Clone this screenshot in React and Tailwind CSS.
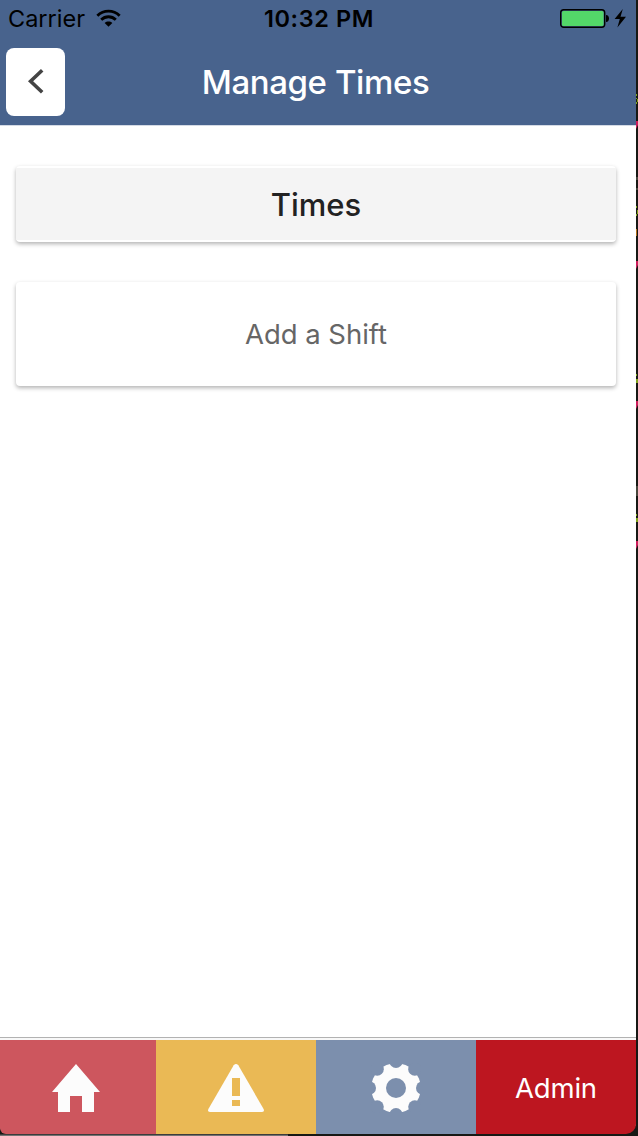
import React from "react";

function StatusBar() {
  return (
    <div className="grid h-10 grid-cols-3 items-center pl-2 pr-2 text-black">
      <div className="flex h-[38px] items-center self-start">
        <span className="w-[88px] text-[23.5px] leading-none">Carrier</span>
        <svg className="mb-0.5 h-[19px] w-[25px]" viewBox="0 0 26 19" fill="none">
          <path d="M1.4 6.6C8 .3 18 .3 24.6 6.6" stroke="black" strokeWidth="3" />
          <path d="M5.4 10.8c4.3-4.1 10.9-4.1 15.2 0" stroke="black" strokeWidth="3" />
          <path d="M9 14.1c2.4-2 5.6-2 8 0l-4 4z" fill="black" />
        </svg>
      </div>
      <div className="flex h-[38px] items-center justify-center self-start pl-0.5">
        <span className="whitespace-nowrap text-[23.5px] font-semibold leading-none tracking-[0.6px]">10:32 PM</span>
      </div>
      <div className="flex h-9 items-center justify-end self-start">
        <svg className="h-[22px] w-[68px]" viewBox="0 0 68 22">
          <rect x=".7" y="2.7" width="44" height="17.6" rx="3" fill="none" stroke="black" strokeWidth="1.4" />
          <rect x="2" y="4" width="41.5" height="15" rx="1.5" fill="#53d769" />
          <path d="M46 8c4 0 4 7 0 7z" fill="black" />
          <path d="m62.8 2-8.2 10h5.2l-2.4 8.5 8.6-10.8h-5.5z" fill="black" />
        </svg>
      </div>
    </div>
  );
}

function Header() {
  return (
    <header className="h-[126px] shrink-0 border-b border-[#d4dae5] bg-[#48638d]">
      <StatusBar />
      <div className="grid grid-cols-[59px_1fr_59px] pl-1.5 pr-[11px] pt-2">
        <button className="flex h-[68px] items-center justify-center rounded-lg bg-white" aria-label="Back">
          <svg className="mb-0.5 h-7 w-7" viewBox="0 0 28 28" fill="none">
            <path d="M20.2 3.2 8.6 14.2l11.6 11.1" stroke="#444" strokeWidth="3.6" />
          </svg>
        </button>
        <h1 className="flex h-[68px] items-center justify-center text-[33px] font-medium leading-none tracking-[-0.4px] text-white">
          Manage Times
        </h1>
      </div>
    </header>
  );
}

function TabBar() {
  return (
    <nav className="grid h-[97px] shrink-0 grid-cols-[156px_160px_160px_160px] rounded-br-[10px] rounded-bl-[6px] border-t border-[#b2b2b2] pt-0.5">
      <div className="flex items-center justify-center rounded-bl-[6px] bg-[#cd565e] pt-0.5 shadow-[0_-2px_0_#f8f8f8]">
        <svg className="ml-[-4px] h-12 w-12" viewBox="0 0 48 48" fill="#fcfcfc">
          <path d="M24 0 0 28h6v20h12V32h12v16h12V28h6z" />
        </svg>
      </div>
      <div className="flex items-center justify-center bg-[#eab955] pt-0.5 shadow-[0_-2px_0_#f8f8f8]">
        <svg className="h-12 w-14" viewBox="0 0 56 48">
          <path d="M25.7 1.3Q28-1.3 30.3 1.3L55.6 45Q56.8 48 53.5 48h-51Q-.8 48 .4 45z" fill="#fcfcfc" />
          <path d="M24 14h8v18h-8zM24 36h8v6h-8z" fill="#eab955" />
        </svg>
      </div>
      <div className="flex items-center justify-center bg-[#7c8fad] pt-0.5 shadow-[0_-2px_0_#f8f8f8]">
        <svg className="h-[50px] w-[50px]" viewBox="-25 -25 50 50">
          <circle r="24.8" fill="#fcfcfc" />
          <g fill="#7c8fad">
            <circle r="10" />
            <circle cy="-26.6" r="6.6" />
            <circle cy="26.6" r="6.6" />
            <circle cx="-26.6" r="6.6" />
            <circle cx="26.6" r="6.6" />
            <circle cx="18.8" cy="18.8" r="6.6" />
            <circle cx="-18.8" cy="18.8" r="6.6" />
            <circle cx="18.8" cy="-18.8" r="6.6" />
            <circle cx="-18.8" cy="-18.8" r="6.6" />
          </g>
        </svg>
      </div>
      <div className="flex items-center justify-center rounded-br-[10px] bg-[#bd1620] pt-[3px] text-[27.5px] leading-none tracking-[-0.2px] text-white shadow-[0_-2px_0_#f8f8f8]">
        Admin
      </div>
    </nav>
  );
}

function EditorEdge() {
  return (
    <svg className="h-[1136px] w-0.5 shrink-0" viewBox="0 0 2 1136">
      <path d="M0 0h2v1136H0z" fill="#171814" />
      <path d="M0 94h1v2H0zM0 99h2v3H0v2h1v-6H0zM0 206h1v2H0zM0 210h2v4H0v2h1v-6H0zM0 374h1v2H0zM0 379h2v4H0zM0 514h1v2H0zM0 518h2v4H0z" fill="#7fa31b" />
      <path d="M0 121h2v4l-2 4zM0 261h2v4l-2 4zM0 401h2v4l-2 4zM0 541h2v4l-2 4z" fill="#cc1c5b" />
      <path d="M0 229h1v7H0z" fill="#b36e18" />
      <path d="M0 177h2v3H0zM0 188h2v2H0zM0 486h2v10H0z" fill="#48463c" />
    </svg>
  );
}

export default function App() {
  return (
    <div className="flex h-[1136px] w-[638px] overflow-hidden bg-[#171814] font-['Inter','Liberation_Sans',sans-serif]">
      <div className="flex w-[636px] flex-col">
        <div className="flex h-[1134px] flex-col">
          <Header />
          <main className="flex flex-1 flex-col gap-10 bg-white pl-4 pr-5 pt-10">
            <section className="h-[76px] rounded bg-white py-0.5 shadow-[0_2px_4px_rgba(0,0,0,0.3)]">
              <h2 className="flex h-[72px] items-center justify-center bg-[#f4f4f4] pt-px text-[31px] font-medium leading-none text-[#222]">
                Times
              </h2>
            </section>
            <button className="flex h-[104px] items-center justify-center rounded bg-white pt-0.5 text-[27.5px] tracking-[-0.05px] text-[#666] shadow-[0_2px_4px_rgba(0,0,0,0.3)]">
              Add a Shift
            </button>
          </main>
          <TabBar />
        </div>
        <div className="h-0.5 w-[288px] border-t border-[#3c3c3c] bg-[#727272]" />
      </div>
      <EditorEdge />
    </div>
  );
}
